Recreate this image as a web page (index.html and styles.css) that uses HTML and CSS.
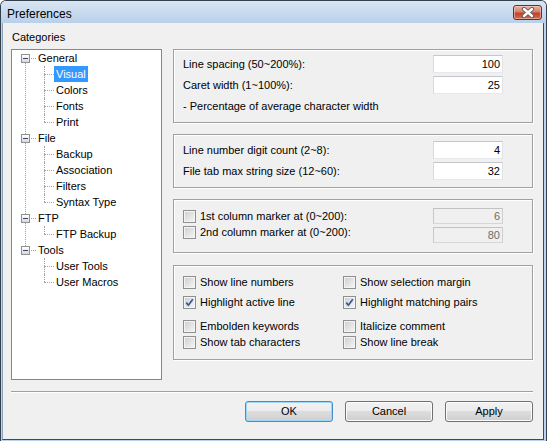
FILE: index.html
```html
<!DOCTYPE html>
<html>
<head>
<meta charset="utf-8">
<title>Preferences</title>
<link rel="stylesheet" href="styles.css">
</head>
<body>
<div class="window">
  <div class="titlebar">
    <span class="title">Preferences</span>
    <span class="close">
      <svg width="14" height="11" viewBox="0 0 14 11">
        <path d="M3 2 L11 9 M11 2 L3 9" stroke="#5a5a5a" stroke-width="4.2" stroke-linecap="round" fill="none"/>
        <path d="M3 2 L11 9 M11 2 L3 9" stroke="#ffffff" stroke-width="2.4" stroke-linecap="round" fill="none"/>
      </svg>
    </span>
  </div>
  <div class="client">
    <div class="main">
      <div class="left">
        <div class="cap">Categories</div>
        <div class="treebox">
          <ul class="tree">
            <li class="node">
              <div class="row"><span class="exp"></span><span class="dash"></span><span class="label">General</span></div>
              <ul class="children">
                <li class="leaf"><span class="hline"></span><span class="label sel">Visual</span></li>
                <li class="leaf"><span class="hline"></span><span class="label">Colors</span></li>
                <li class="leaf"><span class="hline"></span><span class="label">Fonts</span></li>
                <li class="leaf"><span class="hline"></span><span class="label">Print</span></li>
              </ul>
            </li>
            <li class="node">
              <div class="row"><span class="exp"></span><span class="dash"></span><span class="label">File</span></div>
              <ul class="children">
                <li class="leaf"><span class="hline"></span><span class="label">Backup</span></li>
                <li class="leaf"><span class="hline"></span><span class="label">Association</span></li>
                <li class="leaf"><span class="hline"></span><span class="label">Filters</span></li>
                <li class="leaf"><span class="hline"></span><span class="label">Syntax Type</span></li>
              </ul>
            </li>
            <li class="node">
              <div class="row"><span class="exp"></span><span class="dash"></span><span class="label">FTP</span></div>
              <ul class="children">
                <li class="leaf"><span class="hline"></span><span class="label">FTP Backup</span></li>
              </ul>
            </li>
            <li class="node">
              <div class="row"><span class="exp"></span><span class="dash"></span><span class="label">Tools</span></div>
              <ul class="children">
                <li class="leaf"><span class="hline"></span><span class="label">User Tools</span></li>
                <li class="leaf"><span class="hline"></span><span class="label">User Macros</span></li>
              </ul>
            </li>
          </ul>
        </div>
      </div>
      <div class="right">
        <div class="group g1">
          <div class="frow"><span>Line spacing (50~200%):</span><span class="edit">100</span></div>
          <div class="frow"><span>Caret width (1~100%):</span><span class="edit">25</span></div>
          <div class="frow"><span>- Percentage of average character width</span></div>
        </div>
        <div class="group g2">
          <div class="frow"><span>Line number digit count (2~8):</span><span class="edit">4</span></div>
          <div class="frow"><span>File tab max string size (12~60):</span><span class="edit">32</span></div>
        </div>
        <div class="group g3">
          <div class="markers">
            <div class="crow"><span class="cb"></span><span>1st column marker at (0~200):</span></div>
            <div class="crow"><span class="cb"></span><span>2nd column marker at (0~200):</span></div>
          </div>
          <div class="dedits">
            <span class="edit disabled">6</span>
            <span class="edit disabled">80</span>
          </div>
        </div>
        <div class="group g4">
          <div class="crow"><span class="cb"></span><span>Show line numbers</span></div>
          <div class="crow"><span class="cb"></span><span>Show selection margin</span></div>
          <div class="crow"><span class="cb"><svg width="11" height="11" viewBox="0 0 11 11"><path d="M2.3 5.6 L4.4 8.2 L8.8 2.2" stroke="#3b5494" stroke-width="1.7" fill="none"/></svg></span><span>Highlight active line</span></div>
          <div class="crow"><span class="cb"><svg width="11" height="11" viewBox="0 0 11 11"><path d="M2.3 5.6 L4.4 8.2 L8.8 2.2" stroke="#3b5494" stroke-width="1.7" fill="none"/></svg></span><span>Highlight matching pairs</span></div>
          <div class="crow gapped"><span class="cb"></span><span>Embolden keywords</span></div>
          <div class="crow gapped"><span class="cb"></span><span>Italicize comment</span></div>
          <div class="crow"><span class="cb"></span><span>Show tab characters</span></div>
          <div class="crow"><span class="cb"></span><span>Show line break</span></div>
        </div>
      </div>
    </div>
    <div class="sep"></div>
    <div class="buttons">
      <span class="btn default">OK</span>
      <span class="btn">Cancel</span>
      <span class="btn">Apply</span>
    </div>
  </div>
</div>
</body>
</html>
```

FILE: styles.css
```css
* { box-sizing: border-box; }

html, body {
  margin: 0;
  padding: 0;
  background: #ffffff;
}

body {
  font-family: "Liberation Sans", Arial, sans-serif;
  font-size: 11px;
  color: #000;
}

.window {
  width: 547px;
  height: 441px;
  border: 1px solid #33414f;
  border-bottom: 0;
  border-radius: 6px 6px 0 0;
  background: #bcd2ea;
  display: flex;
  flex-direction: column;
  overflow: hidden;
}

.titlebar {
  height: 22px;
  flex: none;
  display: flex;
  justify-content: space-between;
  align-items: flex-start;
  background: linear-gradient(#d9e6f3, #c9dbee 50%, #b9d0e9);
}

.title {
  font-size: 12px;
  line-height: 14px;
  padding: 6px 0 0 6px;
}

.close {
  width: 29px;
  height: 15px;
  margin: 4px 4px 0 0;
  border: 1px solid #6e2b20;
  border-radius: 3px;
  background: linear-gradient(#eab1a2, #d8806a 45%, #c2442a 55%, #cf6a52);
  box-shadow: inset 0 0 0 1px rgba(255, 220, 210, 0.5);
  display: flex;
  align-items: center;
  justify-content: center;
}

.client {
  flex: 1;
  margin: 0 2px 1px 1px;
  background: #f0f0f0;
  border-left: 1px solid #8ea2b8;
  border-right: 1px solid #3c4a5a;
  border-bottom: 1px solid #3c4a5a;
  padding: 8px 10px 0 8px;
  display: flex;
  flex-direction: column;
}

.main {
  display: flex;
  gap: 11px;
}

.left {
  width: 151px;
  flex: none;
}

.cap {
  height: 13px;
  line-height: 13px;
  margin-bottom: 5px;
  padding-left: 1px;
}

.treebox {
  height: 331px;
  border: 1px solid #828790;
  background: #fff;
}

.tree, .tree ul {
  list-style: none;
  margin: 0;
  padding: 0;
}

.node {
  position: relative;
}

.node:not(:last-child)::before {
  content: "";
  position: absolute;
  left: 13px;
  top: 13px;
  bottom: -4px;
  border-left: 1px dotted #a0a0a0;
}

.row {
  display: flex;
  align-items: center;
  height: 16px;
  padding-left: 9px;
  position: relative;
  z-index: 1;
}

.exp {
  width: 9px;
  height: 9px;
  flex: none;
  border: 1px solid #929292;
  background: linear-gradient(#ffffff, #d8d8d8);
  display: flex;
  align-items: center;
  justify-content: center;
}

.exp::after {
  content: "";
  width: 5px;
  height: 1px;
  background: #2b4a7a;
}

.dash {
  width: 5px;
  height: 0;
  margin-left: 1px;
  border-top: 1px dotted #a0a0a0;
}

.label {
  padding: 0 2px;
  height: 16px;
  line-height: 16px;
  white-space: nowrap;
}

.label.sel {
  background: #3399ff;
  color: #fff;
}

.leaf {
  position: relative;
  display: flex;
  align-items: center;
  height: 16px;
  padding-left: 32px;
}

.leaf::before {
  content: "";
  position: absolute;
  left: 32px;
  top: 0;
  bottom: 0;
  border-left: 1px dotted #a0a0a0;
}

.leaf:last-child::before {
  bottom: 8px;
}

.hline {
  width: 10px;
  height: 0;
  border-top: 1px dotted #a0a0a0;
}

.right {
  flex: 1;
  margin-top: 18px;
}

.group {
  border: 1px solid #a0a0a0;
  box-shadow: inset 1px 1px 0 #fff, 1px 1px 0 #fff;
  padding-left: 9px;
  padding-right: 29px;
}

.g1 {
  padding-top: 4px;
  padding-bottom: 6px;
  display: flex;
  flex-direction: column;
  gap: 1px;
}

.g2 {
  margin-top: 11px;
  padding-top: 5px;
  padding-bottom: 6px;
  display: flex;
  flex-direction: column;
  gap: 1px;
}

.g3 {
  margin-top: 11px;
  padding-top: 8px;
  padding-bottom: 9px;
  display: flex;
  justify-content: space-between;
}

.g4 {
  margin-top: 12px;
  padding-top: 6px;
  padding-bottom: 7px;
  display: grid;
  grid-template-columns: 160px 1fr;
  grid-auto-rows: 20px;
}

.frow {
  height: 20px;
  display: flex;
  align-items: center;
  justify-content: space-between;
  white-space: nowrap;
}

.edit {
  width: 70px;
  height: 18px;
  background: #fff;
  border: 1px solid;
  border-color: #c4c6cb #e0e2e6 #e6e8ec #d8dade;
  text-align: right;
  padding-right: 2px;
  line-height: 16px;
}

.markers {
  display: flex;
  flex-direction: column;
}

.markers .crow {
  height: 16px;
}

.dedits {
  display: flex;
  flex-direction: column;
  gap: 3px;
}

.edit.disabled {
  height: 16px;
  line-height: 14px;
  background: #f0f0f0;
  border-color: #c2c2c2 #cfcfcf #d6d6d6 #c8c8c8;
  color: #6d6d6d;
}

.crow {
  display: flex;
  align-items: center;
  height: 20px;
  white-space: nowrap;
}

.crow.gapped {
  margin-top: 4px;
}

.cb {
  width: 13px;
  height: 13px;
  flex: none;
  margin-right: 4px;
  border: 1px solid #8e8f8f;
  background: linear-gradient(135deg, #cbcdd0, #f7f7f7);
  box-shadow: inset 0 0 0 1px #f4f4f4;
  display: flex;
  align-items: center;
  justify-content: center;
}

.sep {
  margin-top: 11px;
  border-top: 1px solid #a0a0a0;
  border-bottom: 1px solid #fff;
}

.buttons {
  margin-top: 8px;
  display: flex;
  justify-content: flex-end;
  gap: 12px;
}

.btn {
  width: 88px;
  height: 21px;
  border: 1px solid #707070;
  border-radius: 3px;
  background: linear-gradient(#f2f2f2 0%, #ebebeb 50%, #dddddd 50%, #cfcfcf 100%);
  box-shadow: inset 0 0 0 1px #fcfcfc;
  text-align: center;
  line-height: 19px;
}

.btn.default {
  border-color: #3c8fd0;
  box-shadow: inset 0 0 0 1px #9fd8f6;
}
```
